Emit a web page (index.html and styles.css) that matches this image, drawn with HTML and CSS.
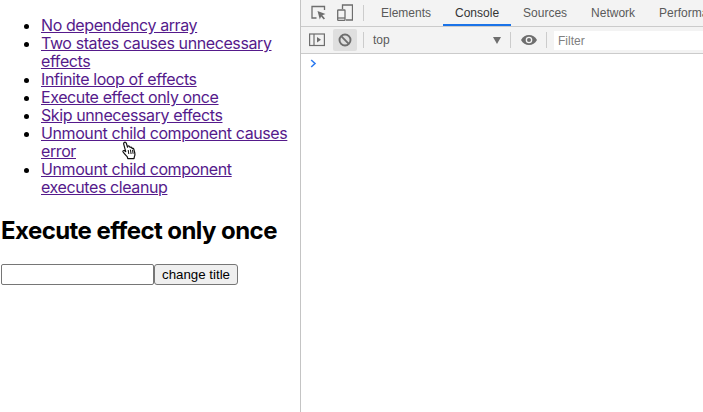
FILE: index.html
```html
<!DOCTYPE html>
<html lang="en">
<head>
<meta charset="utf-8">
<title>Execute effect only once</title>
<link rel="stylesheet" href="styles.css">
</head>
<body>
<div class="page">
  <main class="app">
    <ul class="links">
      <li><a href="#a">No dependency array</a></li>
      <li><a href="#b">Two states causes unnecessary effects</a></li>
      <li><a href="#c">Infinite loop of effects</a></li>
      <li><a href="#d">Execute effect only once</a></li>
      <li><a href="#e">Skip unnecessary effects</a></li>
      <li><a href="#f">Unmount child component causes error</a></li>
      <li><a href="#g">Unmount child component executes cleanup</a></li>
    </ul>
    <h2 class="title">Execute effect only once</h2>
    <div class="form"><input class="field" type="text"><button class="btn" type="button">change title</button></div>
    <svg class="cursor" width="16" height="20" viewBox="0 0 16 20">
      <path d="M3.200 1.500c.8-.6 1.800-.2 2.100.7l1.300 4 .3-1c.7-.5 1.600-.3 1.900.5l.3.700c.6-.5 1.500-.3 1.800.5l.2.600c.7-.4 1.500-.1 1.700.7l1 3.800c.3 1.400.1 2.700-.4 3.700l-.4 2H6.800l-.6-2c-.9-1-2.900-3-4.100-4.700-.6-.9.200-1.800 1.100-1.400l1.500 1L2.700 3.200c-.2-.7 0-1.300.5-1.700z" fill="#fff" stroke="#111" stroke-width="1.200" stroke-linejoin="round"/>
      <path d="M7.200 9l.6 4M9.400 8.600l.7 4.400M11.500 8.800l.6 4" fill="none" stroke="#111" stroke-width="1"/>
    </svg>
  </main>
  <section class="devtools">
    <div class="tabbar">
      <div class="tools">
        <svg class="ico" width="16" height="16" viewBox="0 0 16 16"><path d="M5.500 13H1V1.500h12.500V5" fill="none" stroke="#6e6e6e" stroke-width="1.300"/><path d="M6.500 6l8 3-3.200 1.300 2.700 3.200-1.300 1.100-2.600-3.200-1.300 3z" fill="#6e6e6e"/></svg>
        <svg class="ico" width="16" height="18" viewBox="0 0 16 18"><path d="M5.500 5V1h10v15H9" fill="none" stroke="#6e6e6e" stroke-width="1.300"/><rect x=".7" y="6" width="7.300" height="10.300" rx=".6" fill="none" stroke="#6e6e6e" stroke-width="1.300"/><path d="M.7 14h7.300" stroke="#6e6e6e" stroke-width="1.300"/></svg>
      </div>
      <span class="sep"></span>
      <nav class="tabs">
        <span class="tab">Elements</span>
        <span class="tab active">Console</span>
        <span class="tab">Sources</span>
        <span class="tab">Network</span>
        <span class="tab">Performance</span>
      </nav>
    </div>
    <div class="filterbar">
      <svg class="side" width="16" height="14" viewBox="0 0 16 14"><rect x=".6" y="1" width="14.800" height="11.500" fill="none" stroke="#6e6e6e" stroke-width="1.200"/><path d="M5 1v11.500" stroke="#6e6e6e" stroke-width="1.200"/><path d="M8 4l4 2.800L8 9.500z" fill="#6e6e6e"/></svg>
      <span class="clear"><svg width="14" height="14" viewBox="0 0 14 14"><circle cx="7" cy="7" r="5.500" fill="none" stroke="#6e6e6e" stroke-width="1.900"/><path d="M3.200 3.200l7.600 7.600" stroke="#6e6e6e" stroke-width="1.900"/></svg></span>
      <span class="sep"></span>
      <div class="context"><span>top</span><span class="caret"></span></div>
      <span class="sep"></span>
      <svg class="eye" width="16" height="12" viewBox="0 0 16 12"><path d="M0 6c1.800-3.400 4.700-5 8-5s6.200 1.600 8 5c-1.800 3.400-4.700 5-8 5s-6.200-1.600-8-5z" fill="#6e6e6e"/><circle cx="8" cy="6" r="3.300" fill="#f3f3f3"/><circle cx="8" cy="6" r="2" fill="#6e6e6e"/></svg>
      <span class="sep"></span>
      <div class="filter">Filter</div>
    </div>
    <div class="console">
      <svg width="7" height="9" viewBox="0 0 7 9"><path d="M1.200 1l3.800 3.500L1.200 8" fill="none" stroke="#2f7cf0" stroke-width="1.600"/></svg>
    </div>
  </section>
</div>
</body>
</html>
```
FILE: styles.css
```css
html, body {
  margin: 0;
  padding: 0;
  background: #fff;
}
.page {
  display: flex;
  width: 703px;
  height: 412px;
  overflow: hidden;
  font-family: Inter, "Liberation Sans", sans-serif;
}
.app {
  position: relative;
  box-sizing: border-box;
  width: 301px;
  flex: none;
  padding: 0 1px;
  border-right: 1px solid #c4c4c4;
  color: #000;
  font-size: 16px;
  line-height: 18px;
  letter-spacing: -.4px;
}
.links {
  margin: 16px 0 20px;
  padding-left: 40px;
  width: 256px;
}
.links a {
  color: #551a8b;
  text-decoration: underline;
}
.title {
  margin: 0 0 19px;
  font-size: 24px;
  line-height: 29px;
  font-weight: 700;
  letter-spacing: -.56px;
}
.form {
  display: flex;
  align-items: stretch;
  height: 21px;
}
.field {
  box-sizing: border-box;
  width: 153px;
  height: 21px;
  margin: 0;
  padding: 1px 2px;
  border: 1px solid #767676;
  border-radius: 2px;
  background: #fff;
}
.btn {
  box-sizing: border-box;
  height: 21px;
  margin: 0;
  padding: 0 7px;
  border: 1px solid #767676;
  border-radius: 3px;
  background: #efefef;
  color: #000;
  font-family: "Liberation Sans", Arial, sans-serif;
  font-size: 13.300px;
  line-height: 15px;
  letter-spacing: 0;
}
.cursor {
  position: absolute;
  left: 121px;
  top: 141px;
}
.devtools {
  flex: 1;
  min-width: 0;
  display: flex;
  flex-direction: column;
  font-family: "Liberation Sans", Arial, sans-serif;
  font-size: 12px;
  color: #5a5a5a;
}
.tabbar {
  display: flex;
  align-items: center;
  flex: none;
  height: 27px;
  box-sizing: border-box;
  background: #f3f3f3;
  border-bottom: 1px solid #cbcbcb;
  white-space: nowrap;
  overflow: hidden;
}
.tools {
  display: flex;
  align-items: center;
  gap: 10px;
  padding-left: 10px;
}
.tabbar .sep {
  margin-left: 10px;
}
.sep {
  flex: none;
  width: 1px;
  height: 16px;
  background: #ccc;
}
.tabs {
  display: flex;
  height: 26px;
  margin-left: 5px;
}
.tab {
  padding: 0 12px;
  line-height: 26px;
}
.tab.active {
  color: #333;
  box-shadow: inset 0 -2px 0 #1a73e8;
}
.filterbar {
  display: flex;
  align-items: center;
  flex: none;
  height: 27px;
  box-sizing: border-box;
  background: #f3f3f3;
  border-bottom: 1px solid #cbcbcb;
  white-space: nowrap;
}
.side {
  margin-left: 8px;
}
.clear {
  display: flex;
  align-items: center;
  justify-content: center;
  width: 24px;
  height: 22px;
  margin-left: 8px;
  margin-right: 6px;
  border-radius: 2px;
  background: #dfdfdf;
}
.context {
  display: flex;
  align-items: center;
  justify-content: space-between;
  width: 146px;
  padding: 0 9px 0 9px;
  box-sizing: border-box;
  color: #5a5a5a;
}
.caret {
  width: 0;
  height: 0;
  border-left: 4px solid transparent;
  border-right: 4px solid transparent;
  border-top: 7px solid #6e6e6e;
}
.eye {
  margin: 0 9px 0 10px;
}
.filter {
  flex: 1;
  height: 19px;
  margin-left: 7px;
  padding-left: 4px;
  background: #fff;
  color: #808080;
  line-height: 20px;
}
.console {
  flex: 1;
  padding: 5px 0 0 9px;
  background: #fff;
  line-height: 9px;
}
```
